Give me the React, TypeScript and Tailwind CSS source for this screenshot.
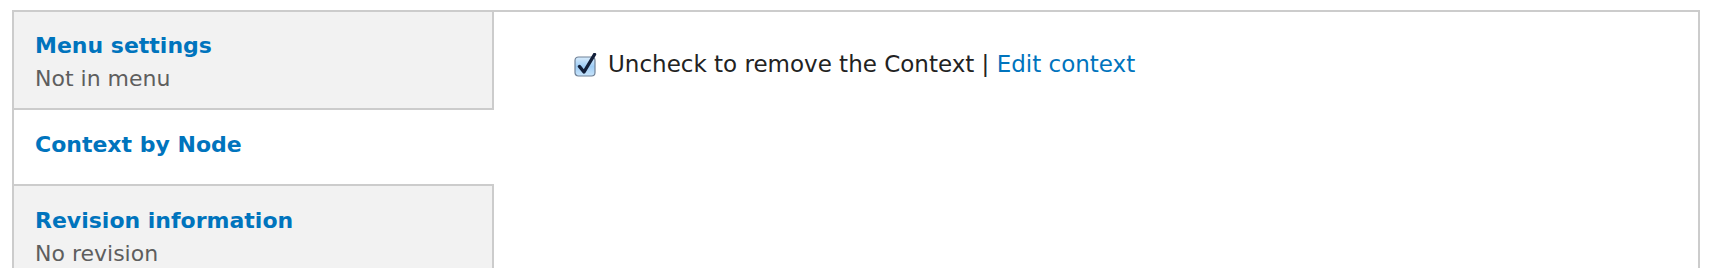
import React from 'react';

const tabs = [
  { title: 'Menu settings', summary: 'Not in menu', active: false, cls: 'h-[96px] pt-[17px]' },
  { title: 'Context by Node', summary: '', active: true, cls: 'h-[76px] pt-[18px]' },
  { title: 'Revision information', summary: 'No revision', active: false, cls: 'h-[96px] pt-[18px]' },
];

function MacCheckbox() {
  return (
    <svg width="26" height="24" viewBox="0 0 26 24" className="shrink-0">
      <defs>
        <linearGradient id="cbg" x1="0" y1="0" x2="0" y2="1">
          <stop offset="0" stopColor="#d9ecfc" />
          <stop offset="0.5" stopColor="#9fcdf5" />
          <stop offset="1" stopColor="#c8e4fb" />
        </linearGradient>
      </defs>
      <rect x="1" y="4" width="20" height="19" rx="3.5" fill="url(#cbg)" stroke="#6f8197" strokeWidth="1.2" />
      <path d="M5.5 13.5 L10 19 L20.5 1.5" fill="none" stroke="#13203a" strokeWidth="3.4" strokeLinecap="round" strokeLinejoin="round" />
    </svg>
  );
}

export default function App() {
  return (
    <div className="w-[1710px] h-[268px] overflow-hidden bg-white pt-[10px] pl-[12px] pr-[10px] font-['DejaVu_Sans',sans-serif]">
      <div className="flex border-2 border-b-0 border-[#cccccc] h-[300px]">
        <div className="w-[480px] shrink-0 bg-[#f2f2f2] flex flex-col">
          {tabs.map((t, i) => (
            <div
              key={t.title}
              className={`${t.cls} shrink-0 pl-[21px] ${i > 0 ? 'border-t-2 border-[#cccccc]' : ''} ${t.active ? 'bg-white' : 'border-r-2 border-r-[#cccccc]'}`}
            >
              <div className="text-[22px] leading-[33px] font-bold text-[#0074bd]">{t.title}</div>
              {t.summary && <div className="text-[22px] leading-[33px] text-[#5e5e5e]">{t.summary}</div>}
            </div>
          ))}
        </div>
        <div className="flex-1 bg-white pl-[80px] pt-[36px]">
          <div className="flex items-center gap-[8px] text-[23px] leading-[33px] text-[#222222]">
            <MacCheckbox />
            <span>
              Uncheck to remove the Context | <span className="text-[#0074bd]">Edit context</span>
            </span>
          </div>
        </div>
      </div>
    </div>
  );
}
